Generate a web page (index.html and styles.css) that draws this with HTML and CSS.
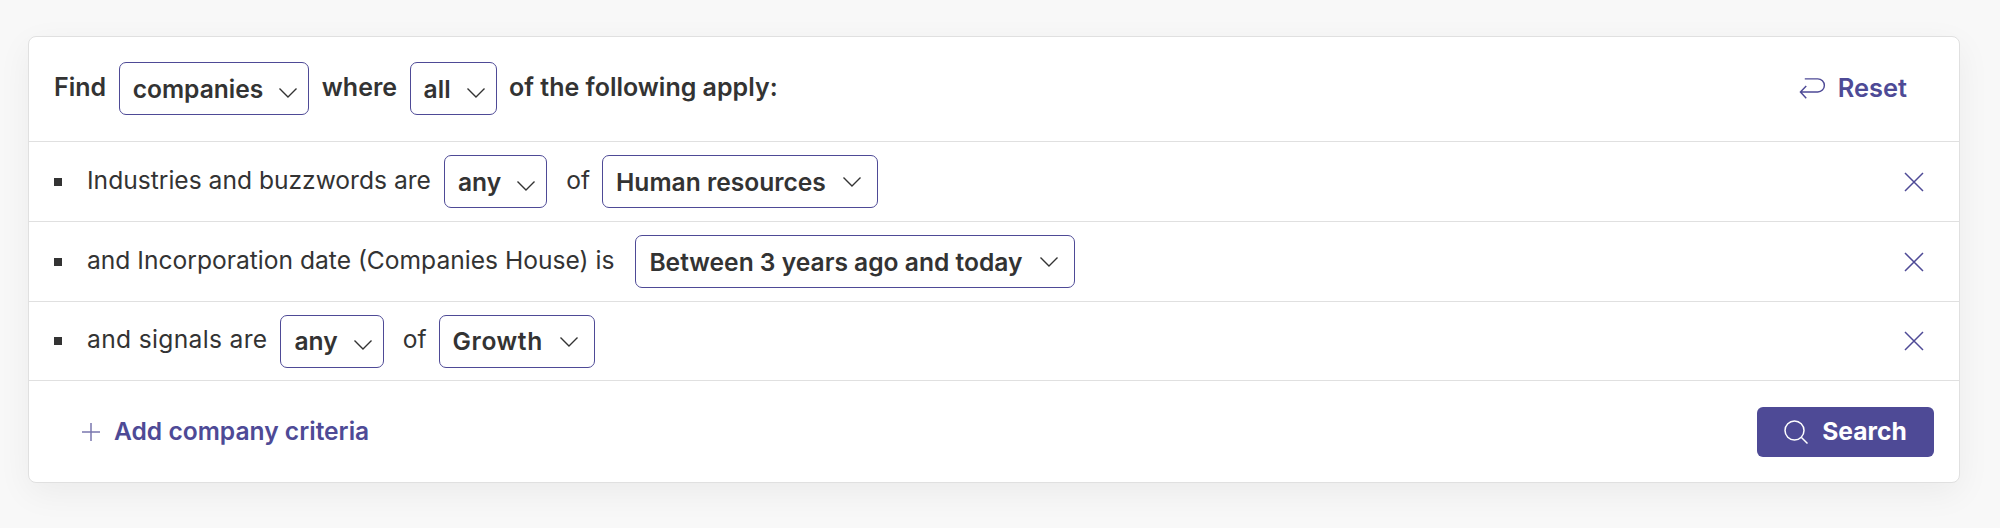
FILE: index.html
```html
<!DOCTYPE html>
<html lang="en">
<head>
<meta charset="utf-8">
<title>Find companies</title>
<link rel="stylesheet" href="styles.css">
</head>
<body>
<div class="card">
  <div class="head">
    <span class="label">Find</span>
    <button class="select"><span>companies</span><svg class="chev" viewBox="0 0 20 12"><path d="M1.500 1.500 10 10 18.500 1.500"/></svg></button>
    <span class="label">where</span>
    <button class="select"><span>all</span><svg class="chev" viewBox="0 0 20 12"><path d="M1.500 1.500 10 10 18.500 1.500"/></svg></button>
    <span class="label">of the following apply:</span>
    <button class="reset">
      <svg class="reset-icon" viewBox="0 0 28 24"><path d="M6 1.500H19.500a6.800 6.800 0 0 1 0 13.600H1.500M7.500 9 1.500 15.100 7.500 21.500"/></svg>
      <span class="lift">Reset</span>
    </button>
  </div>
  <div class="row">
    <i class="bullet"></i>
    <span class="text">Industries and buzzwords are</span>
    <button class="select"><span>any</span><svg class="chev" viewBox="0 0 20 12"><path d="M1.500 1.500 10 10 18.500 1.500"/></svg></button>
    <span class="text of">of</span>
    <button class="select tight"><span>Human resources</span><svg class="chev" viewBox="0 0 20 12"><path d="M1.500 1.500 10 10 18.500 1.500"/></svg></button>
    <button class="remove" aria-label="Remove"><svg viewBox="0 0 20 20"><path d="M1 1 19 19M19 1 1 19"/></svg></button>
  </div>
  <div class="row">
    <i class="bullet"></i>
    <span class="text gap-wide">and Incorporation date (Companies House) is</span>
    <button class="select tight"><span>Between 3 years ago and today</span><svg class="chev" viewBox="0 0 20 12"><path d="M1.500 1.500 10 10 18.500 1.500"/></svg></button>
    <button class="remove" aria-label="Remove"><svg viewBox="0 0 20 20"><path d="M1 1 19 19M19 1 1 19"/></svg></button>
  </div>
  <div class="row last">
    <i class="bullet"></i>
    <span class="text loose">and signals are</span>
    <button class="select"><span>any</span><svg class="chev" viewBox="0 0 20 12"><path d="M1.500 1.500 10 10 18.500 1.500"/></svg></button>
    <span class="text of">of</span>
    <button class="select tight"><span class="loose-bold">Growth</span><svg class="chev" viewBox="0 0 20 12"><path d="M1.500 1.500 10 10 18.500 1.500"/></svg></button>
    <button class="remove" aria-label="Remove"><svg viewBox="0 0 20 20"><path d="M1 1 19 19M19 1 1 19"/></svg></button>
  </div>
  <div class="foot">
    <button class="add">
      <svg class="plus" viewBox="0 0 18 18"><path d="M9 0V18M0 9H18"/></svg>
      <span class="lift">Add company criteria</span>
    </button>
    <button class="search">
      <svg class="search-icon" viewBox="0 0 24 24"><circle cx="10.500" cy="10.500" r="9.500"/><path d="M17.500 17.500 23.500 23.500"/></svg>
      <span class="lift">Search</span>
    </button>
  </div>
</div>
</body>
</html>
```
FILE: styles.css
```css
* { box-sizing: border-box; }
html, body { margin: 0; height: 528px; overflow: hidden; }
body {
  background: #f8f8f8;
  padding: 36px 40px 0 28px;
  font-family: Inter, "Liberation Sans", sans-serif;
  color: #333;
  font-size: 24.6px;
}
button { font: inherit; background: none; border: 0; padding: 0; color: inherit; }
.card {
  width: 1932px;
  height: 447px;
  background: #fff;
  border: 1px solid #e0e0e0;
  border-radius: 8px;
  box-shadow: 0 10px 34px rgba(0, 0, 0, 0.055);
  display: flex;
  flex-direction: column;
}
.head {
  height: 105px;
  flex: none;
  display: flex;
  align-items: center;
  padding: 0 0 1px 25px;
  border-bottom: 1px solid #e0e0e0;
  gap: 12.500px;
}
.label { font-weight: 600; font-size: 25px; padding-bottom: 4px; }
.lift { padding-bottom: 2px; }
.select {
  height: 53px;
  display: flex;
  align-items: center;
  gap: 15px;
  padding: 0 10px 0 13px;
  border: 1px solid #4e4a96;
  border-radius: 7px;
  font-weight: 600;
  color: #333;
  white-space: nowrap;
}
.select.tight { gap: 16.500px; padding-right: 15px; }
.chev { width: 20px; height: 12px; fill: none; stroke: #333; stroke-width: 1.400; margin-top: 8px; flex: none; }
.tight .chev { margin-top: 1px; }
.reset {
  margin-left: auto;
  margin-right: 52px;
  display: flex;
  align-items: center;
  gap: 12px;
  color: #4e4a96;
  font-weight: 600;
  font-size: 25.400px;
}
.reset-icon { width: 27px; height: 24px; fill: none; stroke: #4e4a96; stroke-width: 1.500; }
.row {
  height: 80px;
  flex: none;
  display: flex;
  align-items: center;
  padding-left: 25px;
  border-bottom: 1px solid #e0e0e0;
}
.row.last { height: 79px; }
.bullet { width: 8px; height: 8px; background: #333; margin-right: 25px; flex: none; }
.text { margin-right: 13px; white-space: nowrap; padding-bottom: 4px; }
.text.of { margin: 0 12px 0 19px; }
.text.gap-wide { margin-right: 21px; }
.text.loose { letter-spacing: 0.33px; }
.loose-bold { letter-spacing: 0.6px; }
.remove { margin-left: auto; margin-right: 35px; width: 20px; height: 20px; display: flex; }
.remove svg { width: 20px; height: 20px; fill: none; stroke: #4e4a96; stroke-width: 1.500; }
.foot {
  flex: 1;
  display: flex;
  align-items: center;
  justify-content: space-between;
  padding: 0 25px 0 53px;
}
.add { display: flex; align-items: center; gap: 14px; color: #4e4a96; font-weight: 600; }
.plus { width: 18px; height: 18px; fill: none; stroke: #7a77ae; stroke-width: 1.500; }
.search {
  width: 177px;
  height: 50px;
  display: flex;
  align-items: center;
  justify-content: center;
  gap: 14px;
  background: #4e4a96;
  border-radius: 6px;
  color: #fff;
  font-weight: 700;
}
.search-icon { width: 24px; height: 24px; fill: none; stroke: #fff; stroke-width: 1.500; }
```
